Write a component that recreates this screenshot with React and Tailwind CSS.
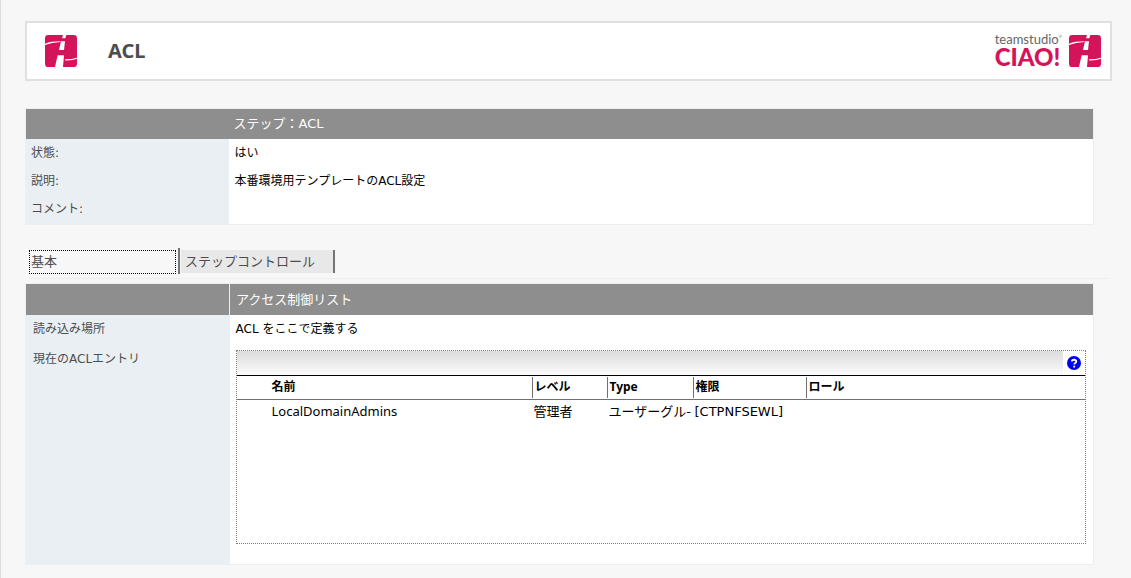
function Mark() {
  return (
    <svg viewBox="0 0 96 96" className="size-8 shrink-0" aria-hidden="true">
      <rect width="96" height="96" rx="10" fill="#d4145a" />
      <g fill="#fff">
        <path d="M54 0H64L61 10H51Z" />
        <path d="M48 19H60L57 45H42Z" />
        <path d="M38 61H57L54 96H30Z" />
      </g>
      <path d="M0 26Q18 19 46 19V21Q20 22 0 30Z" fill="#fff" />
      <path d="M60 73Q82 73 96 68V71Q82 77 60 76Z" fill="#fff" />
    </svg>
  );
}

const info = [
  ["状態:", "はい"],
  ["説明:", "本番環境用テンプレートのACL設定"],
  ["コメント:", ""],
];

const columns = ["レベル", "Type", "権限", "ロール"];

function AclEntries() {
  return (
    <div className="h-[194px] border border-dotted border-[#808080]">
      <div className="flex h-6">
        <div className="flex-1 bg-linear-to-b from-[#dcdcdc] to-[#fbfbfb]" />
        <div className="flex w-[22px] items-center justify-center">
          <button
            type="button"
            aria-label="ヘルプ"
            className="flex size-[14px] items-center justify-center rounded-full bg-[#0000f0]"
          >
            <svg viewBox="0 0 14 14" className="size-[14px]" aria-hidden="true">
              <path
                d="M4.9 5.4C4.9 3.2 9.3 3.2 9.3 5.4C9.3 6.9 7.2 6.9 7.2 8.6M7.2 9.8V11.4"
                fill="none"
                stroke="#fff"
                strokeWidth="1.8"
              />
            </svg>
          </button>
        </div>
      </div>
      <table className="w-full table-fixed border-collapse text-left">
        <colgroup>
          <col className="w-[295px]" />
          <col className="w-[75px]" />
          <col className="w-[86px]" />
          <col className="w-[113px]" />
          <col />
        </colgroup>
        <thead className="font-['Noto_Sans','Noto_Sans_CJK_JP',sans-serif]">
          <tr className="h-6 border-t border-b border-t-black border-b-[#707070] text-xs font-bold">
            <th className="p-0 pl-[35px]">名前</th>
            {columns.map((c) => (
              <th key={c} className="p-0">
                <div className="flex h-[21px] items-center border-l border-[#707070] pl-0.5">{c}</div>
              </th>
            ))}
          </tr>
        </thead>
        <tbody>
          <tr className="h-6 text-[13px] whitespace-nowrap">
            <td className="overflow-hidden p-0 pl-[35px] font-['Noto_Sans']">LocalDomainAdmins</td>
            <td className="overflow-hidden p-0 pl-0.5">管理者</td>
            <td className="overflow-hidden p-0 pl-0.5">ユーザーグル-</td>
            <td className="overflow-hidden p-0 pl-0.5">[CTPNFSEWL]</td>
            <td className="p-0" />
          </tr>
        </tbody>
      </table>
    </div>
  );
}

export default function App() {
  return (
    <div className="min-h-screen border-l border-[#dcdcdc] bg-[#f7f7f7] pt-[21px] pr-[19px] pb-3 pl-6 font-['DejaVu_Sans','Noto_Sans_CJK_JP',sans-serif] text-xs text-black">
      <header className="flex h-[60px] items-center border-2 border-[#e0e0e0] bg-white pr-[9px] pl-[18px]">
        <Mark />
        <h1 className="ml-[31px] flex-1 font-['Noto_Sans',sans-serif] text-xl font-bold text-[#4d4d4d]">
          ACL
        </h1>
        <div className="mr-[7px] font-['Lato',sans-serif]">
          <div className="flex text-[13px] leading-3 text-[#666]">
            teamstudio<span className="text-[4px] leading-2">®</span>
          </div>
          <div className="text-2xl leading-6 font-black text-[#d4145a]">CIAO!</div>
        </div>
        <Mark />
      </header>

      <main className="mt-[27px]">
        <table className="w-[calc(100%-18px)] table-fixed border-collapse border border-[#eee] bg-white text-left">
          <colgroup>
            <col className="w-[203px]" />
            <col />
          </colgroup>
          <thead>
            <tr className="h-[30px] bg-[#8e8e8e] text-[13px] text-white">
              <td className="p-0" />
              <th className="p-0 pl-[5px] font-normal">ステップ：ACL</th>
            </tr>
          </thead>
          <tbody>
            {info.map(([label, value]) => (
              <tr key={label} className="h-7 last:h-[30px]">
                <th className="bg-[#eaeff3] p-0 pl-[5px] font-normal text-[#4d4d4d]">{label}</th>
                <td className="p-0 pl-1.5">{value}</td>
              </tr>
            ))}
          </tbody>
        </table>

        <div
          role="tablist"
          className="mt-[23px] mr-1 ml-[3px] flex h-[31px] items-start border-b border-[#eee] text-[13px] text-[#4d4d4d]"
        >
          <button
            type="button"
            role="tab"
            aria-selected="true"
            className="mt-0.5 ml-px h-6 w-[147px] border border-dotted border-black pl-px text-left"
          >
            基本
          </button>
          <div className="ml-0.5 h-[26px] w-0.5 bg-[#757575]" />
          <button
            type="button"
            role="tab"
            aria-selected="false"
            className="mt-0.5 ml-px h-[23px] w-[154px] border-r-2 border-[#757575] bg-[#e8e8e8] pl-1 text-left"
          >
            ステップコントロール
          </button>
        </div>

        <table className="mt-1 w-[calc(100%-18px)] table-fixed border-collapse border border-[#eee] bg-white text-left">
          <colgroup>
            <col className="w-[204px]" />
            <col />
          </colgroup>
          <thead>
            <tr className="h-[31px] bg-[#8e8e8e] text-[13px] text-white">
              <td className="border-r border-[#eee] p-0" />
              <th className="p-0 pl-1.5 font-normal">アクセス制御リスト</th>
            </tr>
          </thead>
          <tbody>
            <tr className="h-7">
              <th className="bg-[#eaeff3] p-0 pl-[7px] font-normal text-[#4d4d4d]">読み込み場所</th>
              <td className="p-0 pl-1.5">ACL をここで定義する</td>
            </tr>
            <tr className="h-[222px] align-top">
              <th className="bg-[#eaeff3] p-0 pt-2 pl-[7px] font-normal text-[#4d4d4d]">
                現在のACLエントリ
              </th>
              <td className="p-0 pt-[7px] pr-[7px] pl-1.5">
                <AclEntries />
              </td>
            </tr>
          </tbody>
        </table>
      </main>
    </div>
  );
}
